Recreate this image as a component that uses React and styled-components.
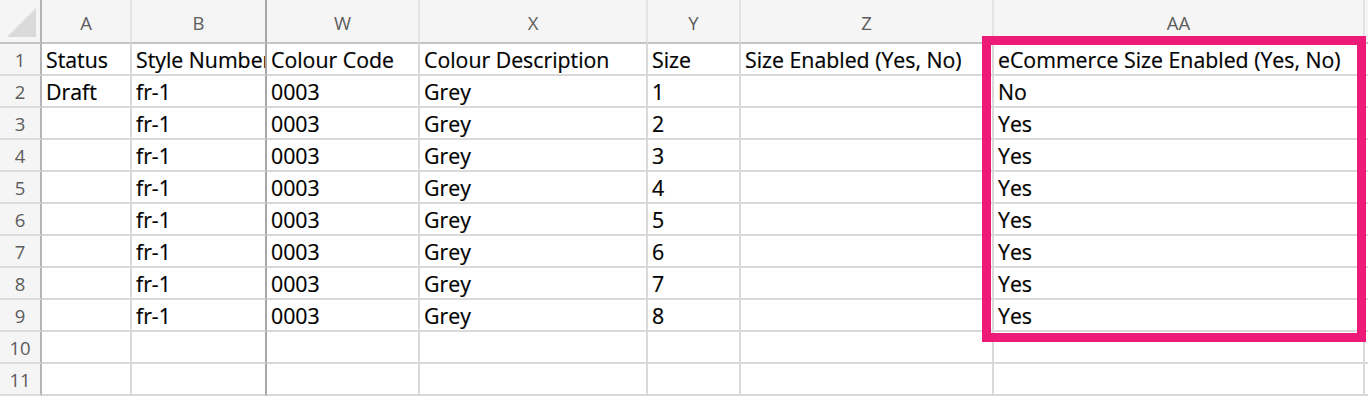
import React from "react";
import styled, { createGlobalStyle } from "styled-components";

const GlobalStyle = createGlobalStyle`
  html, body {
    margin: 0;
    padding: 0;
    background: #ffffff;
    overflow: hidden;
  }
  body {
    font-family: "Open Sans", "Liberation Sans", sans-serif;
  }
`;

const COLS = [42, 90, 135, 153, 228, 93, 253, 371, 30];
const LETTERS = ["A", "B", "W", "X", "Y", "Z", "AA", ""];

const rows = [
  ["Status", "Style Number", "Colour Code", "Colour Description", "Size", "Size Enabled (Yes, No)", "eCommerce Size Enabled (Yes, No)", ""],
  ["Draft", "fr-1", "0003", "Grey", "1", "", "No", ""],
  ["", "fr-1", "0003", "Grey", "2", "", "Yes", ""],
  ["", "fr-1", "0003", "Grey", "3", "", "Yes", ""],
  ["", "fr-1", "0003", "Grey", "4", "", "Yes", ""],
  ["", "fr-1", "0003", "Grey", "5", "", "Yes", ""],
  ["", "fr-1", "0003", "Grey", "6", "", "Yes", ""],
  ["", "fr-1", "0003", "Grey", "7", "", "Yes", ""],
  ["", "fr-1", "0003", "Grey", "8", "", "Yes", ""],
  ["", "", "", "", "", "", "", ""],
  ["", "", "", "", "", "", "", ""],
];

const Sheet = styled.div`
  position: relative;
  display: grid;
  grid-template-columns: ${COLS.map((c) => c + "px").join(" ")};
  grid-template-rows: 44px repeat(11, 32px);
  width: 1368px;
  height: 396px;
  overflow: hidden;
`;

const Corner = styled.div`
  box-sizing: border-box;
  background: #f5f5f5;
  border-right: 2px solid #b4b4b4;
  border-bottom: 2px solid #c4c4c4;
  position: relative;

  &::after {
    content: "";
    position: absolute;
    left: 7px;
    top: 8px;
    width: 29px;
    height: 29px;
    background: #dadada;
    clip-path: polygon(100% 0, 100% 100%, 0 100%);
  }
`;

const ColHead = styled.div`
  box-sizing: border-box;
  background: #f5f5f5;
  border-right: 2px solid ${(p) => (p.$frozen ? "#a6a6a6" : "#e2e2e2")};
  border-bottom: 2px solid #c4c4c4;
  display: flex;
  align-items: center;
  justify-content: center;
  padding-top: 2px;
  font-size: 18.5px;
  color: #5c5c5c;
`;

const RowHead = styled.div`
  box-sizing: border-box;
  background: #f5f5f5;
  border-right: 2px solid #b4b4b4;
  border-bottom: 2px solid #dcdcdc;
  display: flex;
  align-items: center;
  justify-content: center;
  padding-top: 1px;
  font-size: 18.5px;
  color: #5c5c5c;
`;

const Cell = styled.div`
  box-sizing: border-box;
  border-right: 2px solid ${(p) => (p.$frozen ? "#a6a6a6" : "#d9d9d9")};
  border-bottom: 2px solid #d9d9d9;
  padding: 1px 0 0 4px;
  font-size: 21.3px;
  line-height: 29px;
  color: #000000;
  white-space: nowrap;
  overflow: hidden;
  -webkit-text-stroke: 0.2px #000000;
`;

const Highlight = styled.div`
  position: absolute;
  left: 982px;
  top: 36px;
  width: 384px;
  height: 306px;
  box-sizing: border-box;
  border: 9px solid #ee1a78;
  pointer-events: none;
`;

export default function App() {
  return (
    <>
      <GlobalStyle />
      <Sheet>
        <Corner />
        {LETTERS.map((l, i) => (
          <ColHead key={"h" + i} $frozen={i === 1}>
            {l}
          </ColHead>
        ))}
        {rows.map((r, ri) => (
          <React.Fragment key={ri}>
            <RowHead>{ri + 1}</RowHead>
            {r.map((v, ci) => (
              <Cell key={ci} $frozen={ci === 1}>
                {v}
              </Cell>
            ))}
          </React.Fragment>
        ))}
        <Highlight />
      </Sheet>
    </>
  );
}
